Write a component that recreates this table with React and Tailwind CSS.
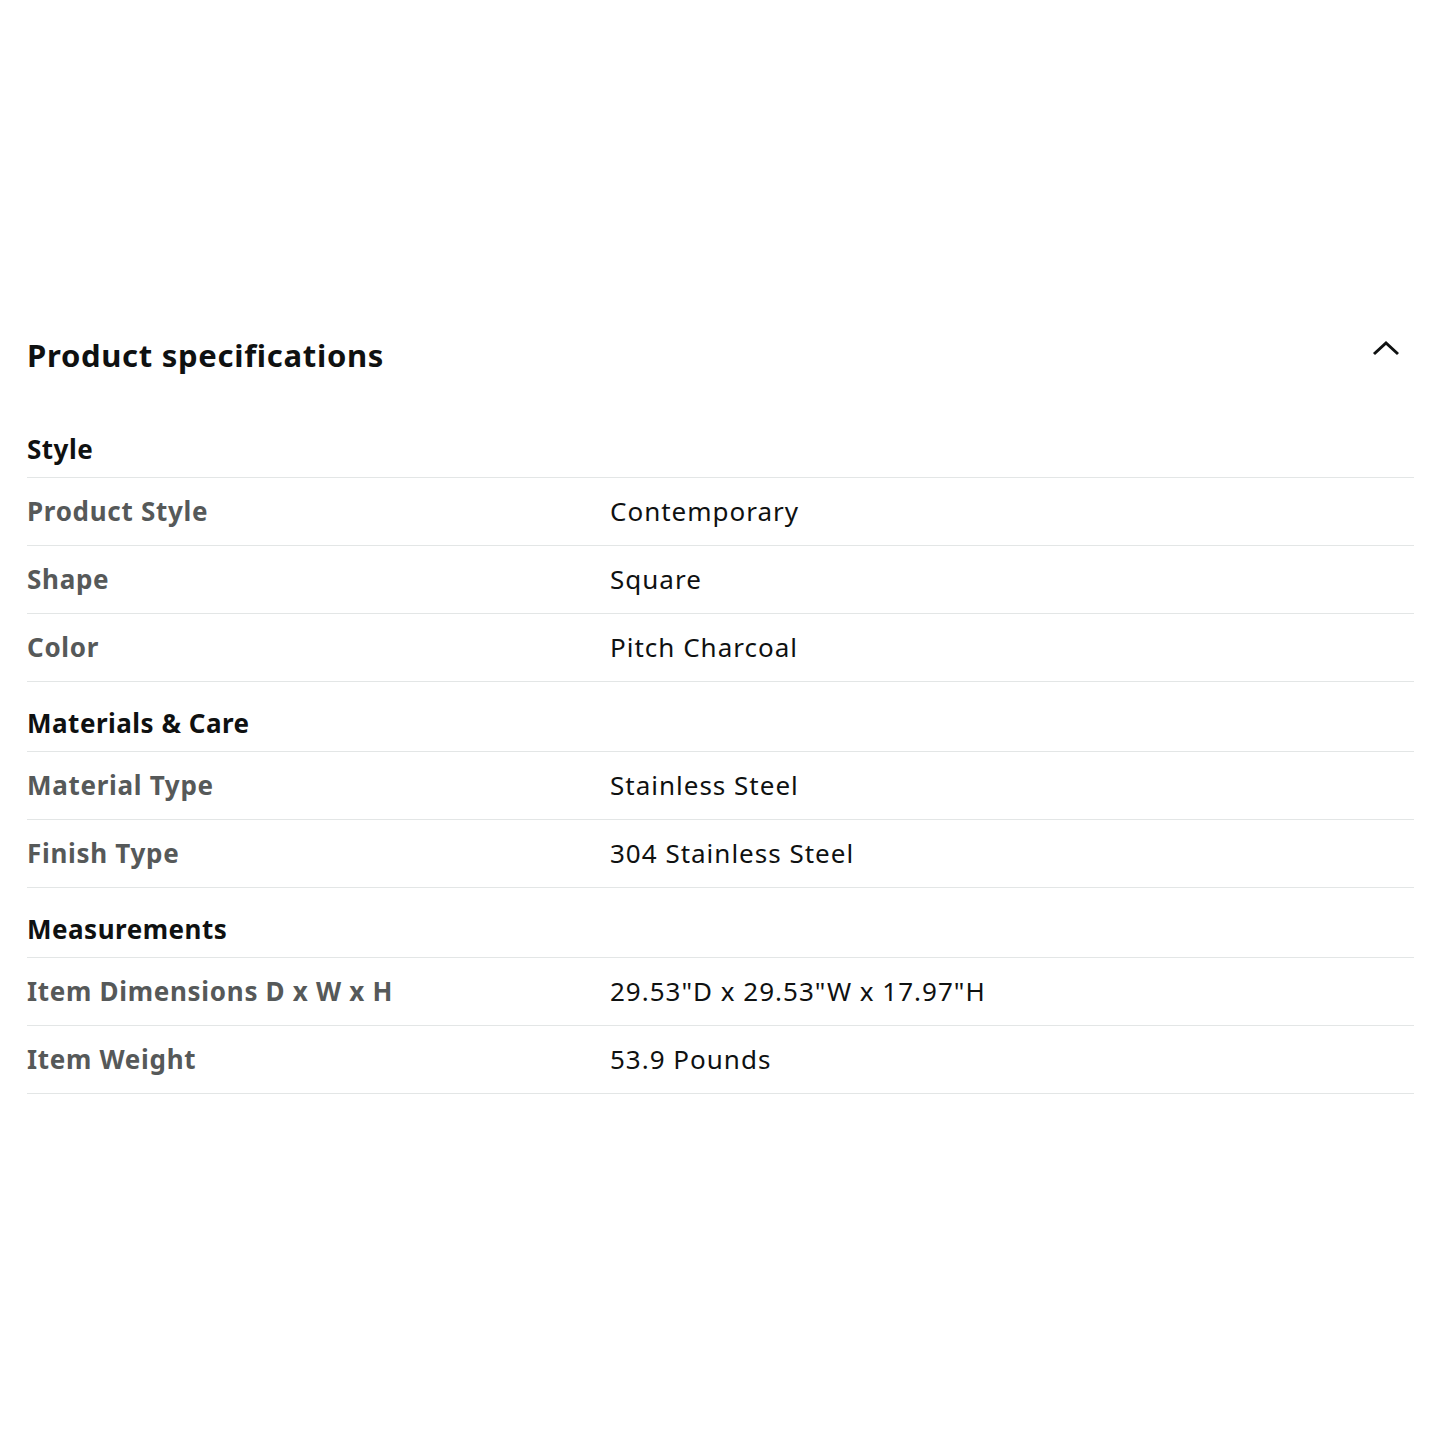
import React from 'react'

const sections = [
  {
    title: 'Style',
    rows: [
      ['Product Style', 'Contemporary'],
      ['Shape', 'Square'],
      ['Color', 'Pitch Charcoal'],
    ],
  },
  {
    title: 'Materials & Care',
    rows: [
      ['Material Type', 'Stainless Steel'],
      ['Finish Type', '304 Stainless Steel'],
    ],
  },
  {
    title: 'Measurements',
    rows: [
      ['Item Dimensions D x W x H', '29.53"D x 29.53"W x 17.97"H'],
      ['Item Weight', '53.9 Pounds'],
    ],
  },
]

function SpecRow({ label, value }) {
  return (
    <div className="flex h-[68px] items-center border-b border-[#e3e6e6]">
      <div className="w-[583px] shrink-0 text-[26px] font-bold tracking-[0.7px] text-[#565959]">{label}</div>
      <div className="text-[26px] tracking-[1px] text-[#0f1111]">{value}</div>
    </div>
  )
}

export default function App() {
  return (
    <div
      className="min-h-[1440px] bg-white pl-[27px] pr-[26px] pt-[330px]"
      style={{ fontFamily: '"Noto Sans", "Open Sans", sans-serif' }}
    >
      {/* header */}
      <div className="flex h-[50px] items-center justify-between">
        <h2 className="text-[31px] font-bold tracking-[0.7px] text-[#0f1111]">Product specifications</h2>
        <svg width="28" height="16" viewBox="0 0 28 16" className="mr-[14px] -mt-[14px]">
          <polyline points="2,14 14,3 26,14" fill="none" stroke="#0f1111" strokeWidth="3" />
        </svg>
      </div>

      <div className="mt-[28px]">
        {sections.map((s) => (
          <div key={s.title}>
            <div className="flex h-[70px] items-end border-b border-[#e3e6e6] pb-[8px]">
              <h3 className="text-[26px] font-bold tracking-[0.5px] text-[#0f1111]">{s.title}</h3>
            </div>
            {s.rows.map(([l, v]) => (
              <SpecRow key={l} label={l} value={v} />
            ))}
          </div>
        ))}
      </div>
    </div>
  )
}
